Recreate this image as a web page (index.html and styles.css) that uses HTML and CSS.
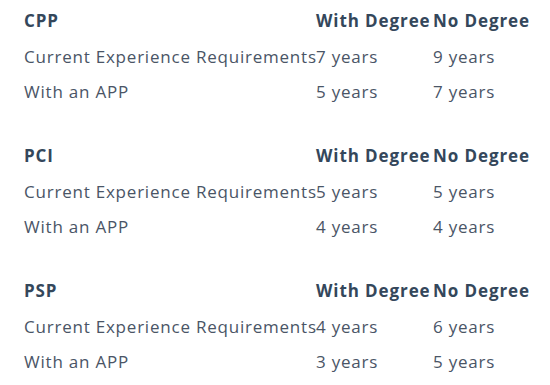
FILE: index.html
```html
<!DOCTYPE html>
<html>
<head>
<meta charset="utf-8">
<link rel="stylesheet" href="styles.css">
</head>
<body>
<div class="page">
  <div class="req">
    <div class="row head"><span>CPP</span><span>With Degree</span><span>No Degree</span></div>
    <div class="row"><span>Current Experience Requirements</span><span>7 years</span><span>9 years</span></div>
    <div class="row"><span>With an APP</span><span>5 years</span><span>7 years</span></div>
  </div>
  <div class="req">
    <div class="row head"><span>PCI</span><span>With Degree</span><span>No Degree</span></div>
    <div class="row"><span>Current Experience Requirements</span><span>5 years</span><span>5 years</span></div>
    <div class="row"><span>With an APP</span><span>4 years</span><span>4 years</span></div>
  </div>
  <div class="req">
    <div class="row head"><span>PSP</span><span>With Degree</span><span>No Degree</span></div>
    <div class="row"><span>Current Experience Requirements</span><span>4 years</span><span>6 years</span></div>
    <div class="row"><span>With an APP</span><span>3 years</span><span>5 years</span></div>
  </div>
</div>
</body>
</html>
```
FILE: styles.css
```css
html, body {
  margin: 0;
  padding: 0;
  background: #ffffff;
}
.page {
  padding: 2px 0 0 24px;
  font-family: "Open Sans", Lato, sans-serif;
  font-size: 17px;
  letter-spacing: 0.78px;
  color: #4a5566;
}
.req {
  margin-bottom: 28px;
}
.req:last-child {
  margin-bottom: 0;
}
.row {
  display: grid;
  grid-template-columns: 292px 117px auto;
  height: 35px;
  align-items: center;
  white-space: nowrap;
}
.row.head {
  height: 37px;
  font-weight: 700;
  letter-spacing: 0.9px;
  color: #34475b;
}
```
